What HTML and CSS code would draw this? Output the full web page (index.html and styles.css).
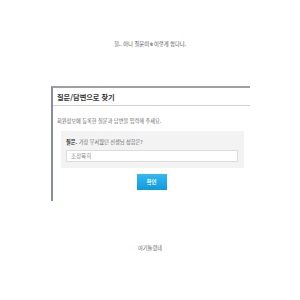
FILE: index.html
```html
<!DOCTYPE html>
<html lang="ko">
<head>
    <meta charset="UTF-8">
    <title>질문/답변으로 찾기</title>
    <link rel="stylesheet" href="styles.css">
</head>
<body>
    <p class="notice">헐.. 아니 질문이ㅎ이렇게 쉽다니.</p>

    <div class="panel">
        <h2 class="panel-title">질문/답변으로 찾기</h2>
        <p class="desc">회원정보에 등록한 질문과 답변을 입력해 주세요.</p>

        <form class="qa-box" action="#" method="POST">
            <label class="question"><b>질문.</b> 가장 무서웠던 선생님 성함은?</label>
            <input type="text" class="answer" name="answer" placeholder="조정묵희">
        </form>

        <div class="actions">
            <button class="btn" type="button">확인</button>
        </div>
    </div>

    <p class="footer-note">여기틀렸네</p>
</body>
</html>
```

FILE: styles.css
```css
* {
    margin: 0;
    padding: 0;
    box-sizing: border-box;
}

body {
    font-family: "Noto Sans CJK KR", "Noto Sans", sans-serif;
    background: #fff;
    color: #444;
}

.notice {
    padding-top: 41px;
    text-align: center;
    font-size: 5.3px;
    line-height: 7px;
    color: #555;
}

.panel {
    width: 199px;
    margin: 38px 0 0 51px;
    padding-bottom: 11px;
    border-left: 2px solid #878ca6;
    border-top: 2px solid #a0a0a0;
}

.panel-title {
    padding: 5px 0 4px 4px;
    font-size: 7.2px;
    line-height: 8px;
    font-weight: 700;
    color: #333;
    border-bottom: 1px solid #d2d2d2;
}

.desc {
    padding: 11px 0 0 4px;
    font-size: 5.2px;
    line-height: 7px;
    color: #666;
}

.qa-box {
    display: flex;
    flex-direction: column;
    gap: 5px;
    width: 183px;
    margin: 7px 0 0 8px;
    padding: 7px 6px 6px 5px;
    background: #f3f3f3;
}

.question {
    font-size: 5.2px;
    line-height: 7px;
    color: #666;
}

.question b {
    color: #333;
}

.answer {
    width: 172px;
    height: 12px;
    padding: 0 4px;
    border: 1px solid #dcdcdc;
    background: #fff;
    font-family: inherit;
    font-size: 5.5px;
    color: #777;
    outline: none;
}

.answer::placeholder {
    color: #888;
}

.actions {
    display: flex;
    justify-content: center;
    margin-top: 6px;
}

.btn {
    width: 30px;
    height: 16px;
    border: none;
    background: linear-gradient(#35b8f0, #0f9ade);
    color: #fff;
    font-family: inherit;
    font-size: 5.5px;
    font-weight: 700;
    cursor: pointer;
}

.footer-note {
    margin-top: 43px;
    text-align: center;
    font-size: 5.2px;
    line-height: 7px;
    color: #666;
}
```
